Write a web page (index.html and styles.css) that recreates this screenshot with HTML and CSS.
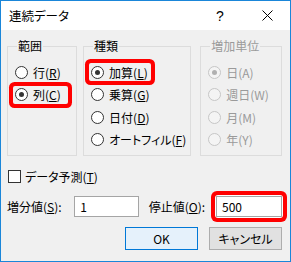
FILE: index.html
```html
<!DOCTYPE html>
<html lang="ja">
<head>
  <meta charset="UTF-8">
  <title>連続データ</title>
  <link rel="stylesheet" href="styles.css">
</head>
<body>
  <!-- ダイアログ -->
  <div class="dialog">
    <div class="titlebar">
      <span class="title">連続データ</span>
      <span class="help">?</span>
      <span class="close">
        <svg width="11" height="11" viewBox="0 0 11 11"><path d="M0.5 0.5 L10.5 10.5 M10.5 0.5 L0.5 10.5" stroke="#000" stroke-width="1"/></svg>
      </span>
    </div>

    <div class="content">
      <div class="groups">
        <fieldset class="group group-range">
          <legend>範囲</legend>
          <label class="radio"><span class="circle"></span>行(<u>R</u>)</label>
          <label class="radio mark"><span class="circle on"></span>列(<u>C</u>)</label>
        </fieldset>

        <fieldset class="group group-type">
          <legend>種類</legend>
          <label class="radio mark"><span class="circle on"></span>加算(<u>L</u>)</label>
          <label class="radio"><span class="circle"></span>乗算(<u>G</u>)</label>
          <label class="radio"><span class="circle"></span>日付(<u>D</u>)</label>
          <label class="radio"><span class="circle"></span>オートフィル(<u>F</u>)</label>
        </fieldset>

        <fieldset class="group group-unit disabled">
          <legend>増加単位</legend>
          <label class="radio"><span class="circle on"></span>日(A)</label>
          <label class="radio"><span class="circle"></span>週日(W)</label>
          <label class="radio"><span class="circle"></span>月(M)</label>
          <label class="radio"><span class="circle"></span>年(Y)</label>
        </fieldset>
      </div>

      <label class="check"><span class="box"></span>データ予測(<u>T</u>)</label>

      <div class="values">
        <span class="value-label">増分値(<u>S</u>):</span>
        <span class="field field-step">1</span>
        <span class="value-label label-stop">停止値(<u>O</u>):</span>
        <span class="field-mark"><span class="field field-stop">500</span></span>
      </div>

      <div class="buttons">
        <button class="btn btn-ok">OK</button>
        <button class="btn">キャンセル</button>
      </div>
    </div>
  </div>
</body>
</html>
```

FILE: styles.css
```css
    /* 全体 */
    body {
      margin: 0;
      padding: 0;
      background-color: #ffffff;
      font-family: 'Noto Sans CJK JP', 'Liberation Sans', sans-serif;
      font-size: 12px;
      font-feature-settings: "palt";
      color: #000;
    }

    .dialog {
      width: 291px;
      height: 262px;
      box-sizing: border-box;
      border: 1px solid #1a86d9;
      background-color: #f0f0f0;
      display: flex;
      flex-direction: column;
    }

    /* タイトルバー */
    .titlebar {
      height: 29px;
      background-color: #fff;
      display: flex;
      align-items: center;
      padding-left: 8px;
    }

    .title {
      font-size: 12.5px;
      flex: 1;
    }

    .help {
      font-family: 'Liberation Sans', sans-serif;
      font-size: 14px;
      width: 8px;
      margin-right: 38px;
    }

    .close {
      display: flex;
      margin-right: 17px;
    }

    /* 本体 */
    .content {
      padding: 9px 8px 0 6px;
    }

    .groups {
      display: flex;
    }

    .group {
      margin: 0;
      border: 1px solid #dcdcdc;
      padding: 10px 2px 6px 5px;
      display: flex;
      flex-direction: column;
      gap: 4.5px;
    }

    .group legend {
      padding: 0 1px;
      margin-left: 4px;
      line-height: 14px;
    }

    .group-range {
      width: 72px;
      box-sizing: border-box;
    }

    .group-type {
      width: 106px;
      box-sizing: border-box;
      margin-left: 6px;
    }

    .group-unit {
      width: 84px;
      box-sizing: border-box;
      margin-left: 9px;
    }

    /* ラジオボタン */
    .radio {
      display: flex;
      align-items: center;
      height: 18px;
      padding: 0 2px;
      white-space: nowrap;
    }

    .circle {
      width: 11px;
      height: 11px;
      border: 1px solid #333;
      border-radius: 50%;
      background-color: #fff;
      margin-right: 5px;
      position: relative;
      flex-shrink: 0;
    }

    .circle.on::after {
      content: "";
      position: absolute;
      left: 3px;
      top: 3px;
      width: 5px;
      height: 5px;
      border-radius: 50%;
      background-color: #333;
    }

    .disabled legend,
    .disabled .radio {
      color: #9a9a9a;
    }

    .disabled .circle {
      border-color: #c6c6c6;
      background-color: #f4f4f4;
    }

    .disabled .circle.on::after {
      background-color: #b0b0b0;
    }

    /* 赤い枠 */
    .mark {
      border-radius: 2px;
      box-shadow: 0 0 0 4px #ff0000;
      margin-right: 4px;
    }

    .group-range .mark {
      margin-right: 6px;
    }

    .group-type .mark {
      width: 58px;
    }

    /* チェックボックス */
    .check {
      display: flex;
      align-items: center;
      height: 14px;
      margin-top: 14px;
      margin-left: 1px;
    }

    .box {
      width: 11px;
      height: 11px;
      border: 1px solid #333;
      background-color: #fff;
      margin-right: 4px;
    }

    /* 増分値・停止値 */
    .values {
      display: flex;
      align-items: center;
      height: 21px;
      margin-top: 12px;
    }

    .value-label {
      width: 68px;
    }

    .label-stop {
      margin-left: 10px;
    }

    .field {
      display: block;
      box-sizing: border-box;
      height: 21px;
      border: 1px solid #a5a5a5;
      background-color: #fff;
      padding-left: 5px;
      line-height: 19px;
    }

    .field-step {
      width: 65px;
    }

    .field-stop {
      width: 66px;
    }

    .field-mark {
      border-radius: 2px;
      box-shadow: 0 0 0 1px #fff, 0 0 0 5px #ff0000;
    }

    /* ボタン */
    .buttons {
      display: flex;
      justify-content: flex-end;
      gap: 11px;
      margin-top: 10px;
    }

    .btn {
      width: 73px;
      height: 23px;
      font-family: inherit;
      font-size: 12px;
      font-feature-settings: "palt";
      background-color: #e1e1e1;
      border: 1px solid #adadad;
      padding: 0;
      color: #000;
    }

    .btn-ok {
      background-color: #e5f1fb;
      border-color: #0078d7;
    }
```
